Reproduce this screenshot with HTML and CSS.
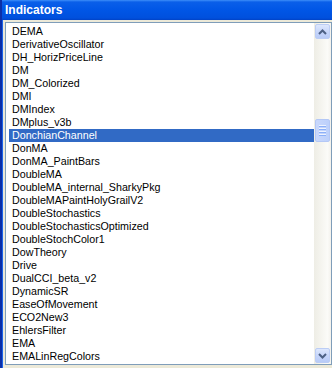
FILE: index.html
```html
<!DOCTYPE html>
<html lang="en">

<head>
    <meta charset="UTF-8">
    <title>Indicators</title>
    <link rel="stylesheet" href="styles.css">
</head>

<body>
    <div class="window">
        <span class="corner"></span>
        <div class="titlebar">Indicators</div>
        <div class="client">
            <div class="listbox">
                <ul class="items">
                    <li>DEMA</li>
                    <li>DerivativeOscillator</li>
                    <li>DH_HorizPriceLine</li>
                    <li>DM</li>
                    <li>DM_Colorized</li>
                    <li>DMI</li>
                    <li>DMIndex</li>
                    <li>DMplus_v3b</li>
                    <li class="selected">DonchianChannel</li>
                    <li>DonMA</li>
                    <li>DonMA_PaintBars</li>
                    <li>DoubleMA</li>
                    <li>DoubleMA_internal_SharkyPkg</li>
                    <li>DoubleMAPaintHolyGrailV2</li>
                    <li>DoubleStochastics</li>
                    <li>DoubleStochasticsOptimized</li>
                    <li>DoubleStochColor1</li>
                    <li>DowTheory</li>
                    <li>Drive</li>
                    <li>DualCCI_beta_v2</li>
                    <li>DynamicSR</li>
                    <li>EaseOfMovement</li>
                    <li>ECO2New3</li>
                    <li>EhlersFilter</li>
                    <li>EMA</li>
                    <li>EMALinRegColors</li>
                </ul>
                <div class="scrollbar">
                    <div class="sb-btn">
                        <svg width="9" height="6" viewBox="0 0 9 6"><polyline points="1,5 4.5,1.5 8,5" fill="none" stroke="#4d6185" stroke-width="2"/></svg>
                    </div>
                    <div class="track">
                        <div class="thumb">
                            <span></span><span></span><span></span><span></span>
                        </div>
                    </div>
                    <div class="sb-btn">
                        <svg width="9" height="6" viewBox="0 0 9 6"><polyline points="1,1 4.5,4.5 8,1" fill="none" stroke="#4d6185" stroke-width="2"/></svg>
                    </div>
                </div>
            </div>
        </div>
    </div>
</body>

</html>
```

FILE: styles.css
```css
body {
    margin: 0;
    padding: 0;
    background: #ece9d8;
}

.window {
    position: relative;
    width: 330px;
    height: 368px;
    border-left: 2px solid #0b2fa8;
    display: flex;
    flex-direction: column;
    overflow: hidden;
}

.corner {
    position: absolute;
    left: -2px;
    top: 0;
    width: 2px;
    height: 13px;
    background: #f00000;
}

.titlebar {
    height: 20px;
    line-height: 20px;
    padding-left: 3px;
    font-family: "Liberation Sans", Arial, sans-serif;
    font-size: 12px;
    font-weight: bold;
    color: #fff;
    background: linear-gradient(#3d8ef9 0, #0a5fe9 2px, #0056e6 50%, #0050dd 90%, #0042c6 100%);
}

.client {
    flex: 1;
    border-left: 1px solid #1d63e8;
    padding: 2px 0 3px 2px;
    display: flex;
}

.listbox {
    flex: 1;
    display: flex;
    border: 1px solid #7f9db9;
    background: #fff;
}

.items {
    flex: 1;
    list-style: none;
    margin: 0;
    padding: 2px 0 1px 3px;
    font-family: "Liberation Sans", Arial, sans-serif;
    font-size: 10.7px;
    color: #000;
}

.items li {
    height: 13px;
    line-height: 13px;
    padding-left: 3px;
    white-space: nowrap;
}

.items li.selected {
    background: #316ac5;
    color: #fff;
}

.scrollbar {
    width: 17px;
    display: flex;
    flex-direction: column;
    background: linear-gradient(to right, #eeede5, #fbfbf8 80%, #f3f1ec);
}

.sb-btn {
    height: 15px;
    margin: 1px;
    border: 1px solid #bccdf5;
    border-radius: 2px;
    box-sizing: border-box;
    background: linear-gradient(#dde7fd, #c4d4fa 60%, #b8cbf7);
    display: flex;
    align-items: center;
    justify-content: center;
}

.sb-btn svg {
    display: block;
}

.track {
    flex: 1;
    display: flex;
    flex-direction: column;
}

.thumb {
    height: 21px;
    margin: 79px 1px 0 1px;
    border: 1px solid #b4c8f6;
    border-radius: 2px;
    background: linear-gradient(to right, #c9d8fc, #bcd0fb);
    display: flex;
    flex-direction: column;
    align-items: center;
    justify-content: center;
    gap: 1px;
}

.thumb span {
    width: 7px;
    height: 1px;
    background: #eef3fe;
    border-bottom: 1px solid #8cb0f8;
}
```
